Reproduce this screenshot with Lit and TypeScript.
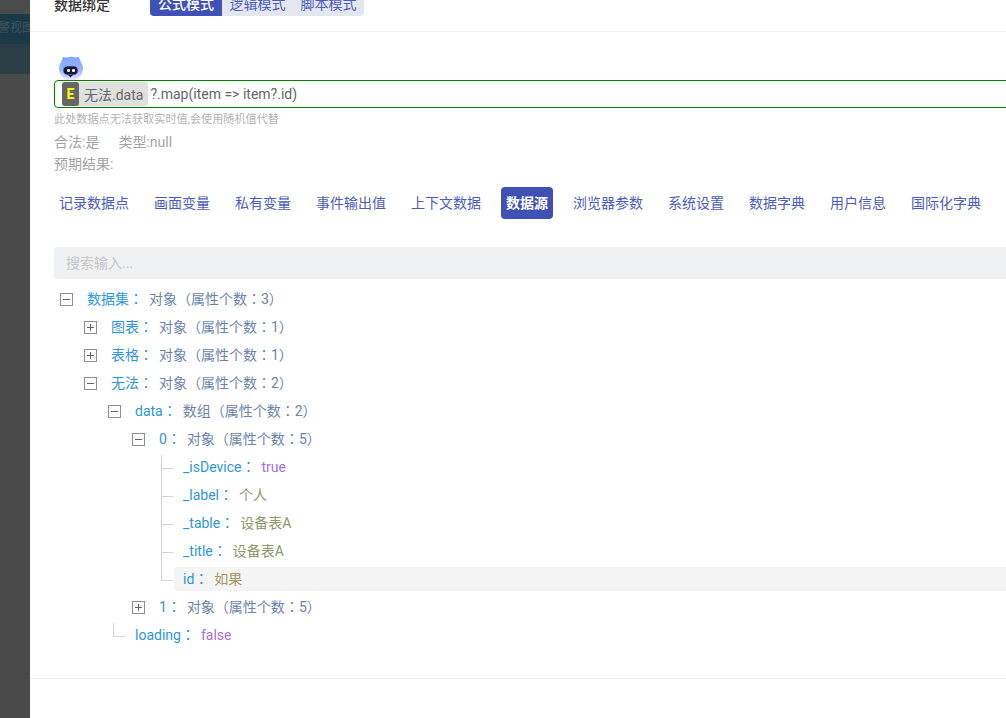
import { LitElement, html, css, svg } from "lit";
import { customElement } from "lit/decorators.js";

type Kind = "obj" | "str" | "bool" | "cur";
interface Row { level: number; key: string; val: string; kind: Kind; icon?: "minus" | "plus"; line?: "mid" | "last"; hl?: boolean; }

const ROWS: Row[] = [
  { level: 0, key: "数据集", val: "对象（属性个数：3）", kind: "obj", icon: "minus" },
  { level: 1, key: "图表", val: "对象（属性个数：1）", kind: "obj", icon: "plus" },
  { level: 1, key: "表格", val: "对象（属性个数：1）", kind: "obj", icon: "plus" },
  { level: 1, key: "无法", val: "对象（属性个数：2）", kind: "obj", icon: "minus" },
  { level: 2, key: "data", val: "数组（属性个数：2）", kind: "obj", icon: "minus" },
  { level: 3, key: "0", val: "对象（属性个数：5）", kind: "obj", icon: "minus" },
  { level: 4, key: "_isDevice", val: "true", kind: "bool", line: "mid" },
  { level: 4, key: "_label", val: "个人", kind: "str", line: "mid" },
  { level: 4, key: "_table", val: "设备表A", kind: "str", line: "mid" },
  { level: 4, key: "_title", val: "设备表A", kind: "str", line: "mid" },
  { level: 4, key: "id", val: "如果", kind: "cur", line: "last", hl: true },
  { level: 3, key: "1", val: "对象（属性个数：5）", kind: "obj", icon: "plus" },
  { level: 2, key: "loading", val: "false", kind: "bool", line: "last" },
];
const TABS = ["记录数据点", "画面变量", "私有变量", "事件输出值", "上下文数据", "数据源", "浏览器参数", "系统设置", "数据字典", "用户信息", "国际化字典"];

@customElement("app-root")
export class AppRoot extends LitElement {
  static styles = css`
    :host { display: block; width: 1006px; height: 718px; overflow: hidden; position: relative; background: #4a4a4a;
      font-family: Roboto, "Noto Sans CJK SC", sans-serif; font-size: 14px; }
    .page { display: flex; height: 718px; }
    .backdrop { width: 30px; flex: none; display: flex; flex-direction: column; overflow: hidden; }
    .b1 { height: 14px; background: #4b4b4b; }
    .b2 { height: 30px; background: #1c3947; color: #3f545e; font-size: 12px; line-height: 29px; white-space: nowrap; overflow: hidden; }
    .b2 span { display: block; margin-left: -2px; }
    .b3 { height: 30px; background: #2c3d46; }
    .b4 { flex: 1; background: #4a4a4a; }
    .modal { flex: 1; min-width: 0; background: #fff; display: flex; flex-direction: column; }
    .head { height: 31px; flex: none; border-bottom: 1px solid #edeef0; display: flex; align-items: flex-start; padding-left: 24px; overflow: hidden; }
    .title { font-size: 14px; line-height: 22px; margin-top: -6px; color: #333; font-weight: 500; width: 96px; flex: none; }
    .modes { display: flex; margin-top: -8px; height: 24px; background: #e3e6ef; border-radius: 4px; overflow: hidden; font-size: 14px; line-height: 24px; color: #4a5cbd; }
    .modes span { padding: 0 7.5px; }
    .modes .on { padding: 0 8px; background: #4051b5; color: #fff; font-weight: 500; }
    .body { flex: 1; padding: 23px 0 0 24px; margin-right: -10px; display: flex; flex-direction: column; }
    .bot { width: 26px; height: 25px; margin-left: 3px; display: block; flex: none; }
    .input { height: 26px; border: 1px solid #008000; border-radius: 4px; display: flex; align-items: center; padding-left: 7px; font-size: 14px; color: #666; flex: none; }
    .chip { display: flex; align-items: center; height: 24px; background: #e0e0e0; border-radius: 3px; padding-right: 5px; color: #666; }
    .e { width: 17px; height: 24px; background: #666; color: #ff0; font-weight: 700; font-size: 14px; border-radius: 3px; text-align: center; line-height: 24px; margin-right: 5px; }
    .expr { margin-left: 2px; }
    .hint { font-size: 11.15px; line-height: 22px; color: #b3b3b3; margin-top: 1px; }
    .meta { font-size: 14px; line-height: 22px; color: #a3a3a3; }
    .meta span + span { margin-left: 19px; }
    .tabs { display: flex; gap: 15px; margin-top: 12px; }
    .tab { height: 32px; line-height: 32px; padding: 0 5px; border-radius: 4px; color: #4a5cbd; white-space: nowrap; }
    .tab.on { background: #4051b5; color: #fff; font-weight: 700; }
    .search { height: 32px; line-height: 32px; background: #eff0f2; border-radius: 4px; margin-top: 28px; padding-left: 12px; color: #c4c6ca; flex: none; }
    .tree { margin-top: 6px; }
    .row { height: 28px; display: flex; align-items: center; position: relative; }
    .ico { width: 13px; height: 13px; flex: none; display: block; }
    .slot { width: 33px; flex: none; padding-left: 6px; box-sizing: border-box; }
    .txt { display: flex; align-items: baseline; height: 24px; line-height: 24px; padding: 0 9px; margin-left: -9px; flex: 1; border-radius: 4px; white-space: nowrap; }
    .txt.hl { background: #f4f4f4; }
    .k { color: #2d96dc; }
    .c { font-family: "Noto Sans CJK JP", sans-serif; line-height: 1; }
    .v { margin-left: 6px; }
    .obj { color: #6a85ab; }
    .str { color: #8a9a6c; }
    .bool { color: #a56fdc; }
    .cur { color: #a8945c; }
    .vl { position: absolute; border-left: 1px solid #d4d4d4; width: 0; top: 0; }
    .tick { position: absolute; top: 15px; width: 11px; border-top: 1px solid #d4d4d4; }
    .foot { height: 39px; flex: none; margin-left: -24px; border-top: 1px solid #edeef0; margin-top: auto; }
  `;

  icon(kind: "minus" | "plus") {
    return html`<svg class="ico" viewBox="0 0 13 13">
      <rect x="0.5" y="0.5" width="12" height="12" fill="#fff" stroke="#8f8f8f"></rect>
      <path d="M3 6.5H10" stroke="#666" fill="none"></path>
      ${kind === "plus" ? svg`<path d="M6.5 3V10" stroke="#666" fill="none"></path>` : ""}
    </svg>`;
  }

  lines(r: Row) {
    if (!r.line) return "";
    const left = r.level === 4 ? 107 : 59;
    const first = r.key === "_isDevice";
    const top = first ? 2 : r.level === 2 ? 2 : 0;
    const bottom = r.line === "last" ? 16 : 28;
    return html`<i class="vl" style="left:${left}px;top:${top}px;height:${bottom - top}px"></i>
      <i class="tick" style="left:${left + 1}px"></i>`;
  }

  value(v: string) {
    const parts = v.split("：");
    return parts.length === 2 ? html`${parts[0]}<span class="c">：</span>${parts[1]}` : v;
  }

  row(r: Row) {
    return html`<div class="row" style="padding-left:${r.level * 24}px">
      ${this.lines(r)}
      <span class="slot">${r.icon ? this.icon(r.icon) : ""}</span>
      <span class="txt ${r.hl ? "hl" : ""}"><span class="k">${r.key}<span class="c">：</span></span><span class="v ${r.kind}">${this.value(r.val)}</span></span>
    </div>`;
  }

  render() {
    return html`<div class="page">
      <div class="backdrop">
        <div class="b1"></div><div class="b2"><span>警视图</span></div><div class="b3"></div><div class="b4"></div>
      </div>
      <div class="modal">
        <div class="head">
          <div class="title">数据绑定</div>
          <div class="modes"><span class="on">公式模式</span><span>逻辑模式</span><span>脚本模式</span></div>
        </div>
        <div class="body">
          <svg class="bot" viewBox="0 0 26 25">
            <defs>
              <linearGradient id="g" x1="0" y1="0" x2="0" y2="1"><stop offset="0" stop-color="#7aa5ff"></stop><stop offset="0.55" stop-color="#9db6fd"></stop><stop offset="1" stop-color="#eeeafc"></stop></linearGradient>
              <linearGradient id="r" x1="0" y1="0" x2="1" y2="0"><stop offset="0" stop-color="#3fd0f5"></stop><stop offset="1" stop-color="#d45be0"></stop></linearGradient>
            </defs>
            <path d="M6 2 L10 2.4 Q14 1 18 2.4 L22 2 L23.6 6.5 A12 12 0 1 1 4.4 6.5Z" fill="url(#g)"></path>
            <rect x="6" y="11" width="15" height="9" rx="4.5" fill="#14183a" stroke="url(#r)" stroke-width="0.8"></rect>
            <path d="M11 20h5l-2.5 2.5z" fill="#14183a"></path>
            <rect x="10" y="14" width="3" height="3" rx="1.2" fill="#fff"></rect>
            <rect x="15" y="14" width="3" height="3" rx="1.2" fill="#fff"></rect>
          </svg>
          <div class="input">
            <span class="chip"><span class="e">E</span>无法.data</span><span class="expr">?.map(item =&gt; item?.id)</span>
          </div>
          <div class="hint">此处数据点无法获取实时值,会使用随机值代替</div>
          <div class="meta"><span>合法:是</span><span>类型:null</span></div>
          <div class="meta">预期结果:</div>
          <div class="tabs">${TABS.map((t) => html`<div class="tab ${t === "数据源" ? "on" : ""}">${t}</div>`)}</div>
          <div class="search">搜索输入...</div>
          <div class="tree">${ROWS.map((r) => this.row(r))}</div>
          <div class="foot"></div>
        </div>
      </div>
    </div>`;
  }
}
